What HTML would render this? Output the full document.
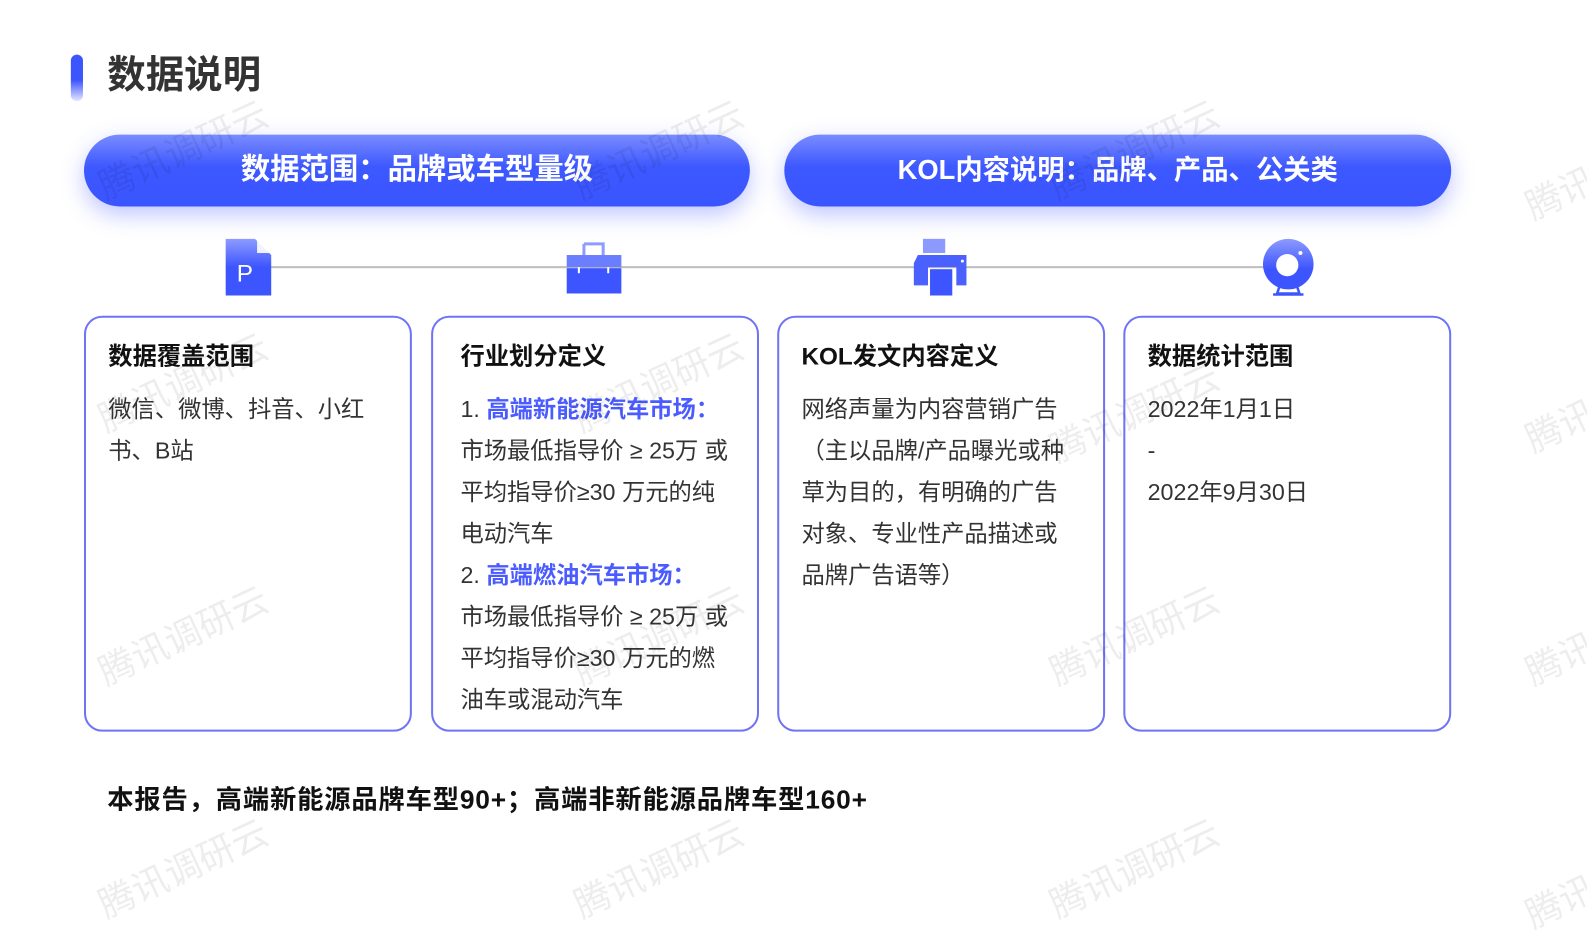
<!DOCTYPE html>
<html><head><meta charset="utf-8"><style>
*{margin:0;padding:0;box-sizing:border-box}
body{width:1587px;height:892px;background:#fff;position:relative;overflow:hidden;font-family:"Liberation Sans","Noto Sans CJK SC",sans-serif;color:#222}
#w{position:absolute;left:0;top:0;width:1568px;height:882px;transform:scale(1.012);transform-origin:0 0}
.abs{position:absolute}
.bar{left:70px;top:54px;width:12px;height:46px;border-radius:6px;background:linear-gradient(#3d55ff 55%,#e6e9ff)}
.title{left:106px;top:50px;font-size:38px;font-weight:bold;color:#333;line-height:50px}
.pill{top:133px;height:71px;border-radius:36px;background:linear-gradient(#7a8cff,#3d58ff 45%,#3a55ff);box-shadow:0 8px 22px rgba(70,90,255,.35);color:#fff;font-size:29px;font-weight:bold;text-align:center;line-height:71px}
.line{left:245px;top:263px;width:1030px;height:2px;background:#bdbdbd}
.card{top:312px;width:324px;height:411px;border:2.5px solid #6f74f5;border-radius:18px;background:#fff;padding:22px 0 0 22px}
.card h3{font-size:24px;font-weight:bold;color:#111;line-height:34px;margin-bottom:14px}
.card p{font-size:23px;line-height:41px;color:#333}
.b{color:#4a5bff;font-weight:bold}
.foot{left:106px;top:770px;font-size:26px;font-weight:bold;color:#111;letter-spacing:0.8px}
.wm{font-size:36px;color:rgba(0,0,0,.07);transform:rotate(-25deg);white-space:nowrap}
</style></head><body><div id="w">
<div class="abs bar"></div>
<div class="abs title">数据说明</div>
<div class="abs pill" style="left:83px;width:658px">数据范围：品牌或车型量级</div>
<div class="abs pill" style="left:775px;width:659px;font-size:27px">KOL内容说明：品牌、产品、公关类</div>
<div class="abs line"></div>
<svg class="abs" style="left:220px;top:234px" width="50" height="60" viewBox="0 0 50 60"><defs><linearGradient id="g" x1="0" y1="0" x2="0" y2="1"><stop offset="0" stop-color="#8e9bff"/><stop offset=".5" stop-color="#3d55ff"/></linearGradient></defs><path d="M3 2H32L48 18V58H3Z" fill="url(#g)"/><path d="M34 2L48 16H34Z" fill="#fff" opacity=".9"/><text x="14" y="44" font-size="24" fill="#fff" font-family="Liberation Sans">P</text></svg>
<svg class="abs" style="left:558px;top:238px" width="58" height="54" viewBox="0 0 58 54"><path d="M19 3H38V14" fill="none" stroke="#8e9bff" stroke-width="3"/><path d="M19 3V14" stroke="#8e9bff" stroke-width="3"/><rect x="2" y="14" width="54" height="12" fill="#6a7eff"/><rect x="2" y="27" width="54" height="25" fill="#3d55ff"/><rect x="13" y="26" width="2" height="6" fill="#fff"/><rect x="42" y="26" width="2" height="6" fill="#fff"/></svg>
<svg class="abs" style="left:901px;top:234px" width="60" height="60" viewBox="0 0 60 60"><rect x="11" y="2" width="22" height="14" fill="#8c9aff"/><path d="M6 18H54V48H44V30H16V48H2V26Z" fill="#4a60ff"/><rect x="18" y="32" width="22" height="26" fill="#3d55ff"/><circle cx="50" cy="24" r="1.5" fill="#fff"/></svg>
<svg class="abs" style="left:1246px;top:234px" width="56" height="60" viewBox="0 0 56 60"><defs><linearGradient id="g2" x1="0" y1="0" x2="0" y2="1"><stop offset="0" stop-color="#8e9bff"/><stop offset=".6" stop-color="#3d55ff"/></linearGradient></defs><circle cx="27" cy="27" r="25" fill="url(#g2)"/><circle cx="26" cy="28" r="11" fill="#fff"/><circle cx="39" cy="16" r="2" fill="#fff"/><path d="M18 50L16 56H38L36 50M12 57H42" stroke="#3d55ff" stroke-width="2.5" fill="none"/></svg>
<div class="abs card" style="left:83px"><h3>数据覆盖范围</h3><p>微信、微博、抖音、小红<br>书、B站</p></div>
<div class="abs card" style="left:426px;padding-left:27px"><h3>行业划分定义</h3><p>1. <span class="b">高端新能源汽车市场：</span><br>市场最低指导价 ≥ 25万 或<br>平均指导价≥30 万元的纯<br>电动汽车<br>2. <span class="b">高端燃油汽车市场：</span><br>市场最低指导价 ≥ 25万 或<br>平均指导价≥30 万元的燃<br>油车或混动汽车</p></div>
<div class="abs card" style="left:768px"><h3>KOL发文内容定义</h3><p>网络声量为内容营销广告<br>（主以品牌/产品曝光或种<br>草为目的，有明确的广告<br>对象、专业性产品描述或<br>品牌广告语等）</p></div>
<div class="abs card" style="left:1110px"><h3>数据统计范围</h3><p>2022年1月1日<br>-<br>2022年9月30日</p></div>
<div class="abs foot">本报告，高端新能源品牌车型90+；高端非新能源品牌车型160+</div>
<div class="abs wm" style="left:90px;top:120px">腾讯调研云</div>
<div class="abs wm" style="left:560px;top:120px">腾讯调研云</div>
<div class="abs wm" style="left:1030px;top:120px">腾讯调研云</div>
<div class="abs wm" style="left:1500px;top:140px">腾讯调研云</div>
<div class="abs wm" style="left:90px;top:350px">腾讯调研云</div>
<div class="abs wm" style="left:560px;top:350px">腾讯调研云</div>
<div class="abs wm" style="left:1030px;top:380px">腾讯调研云</div>
<div class="abs wm" style="left:1500px;top:370px">腾讯调研云</div>
<div class="abs wm" style="left:90px;top:600px">腾讯调研云</div>
<div class="abs wm" style="left:560px;top:600px">腾讯调研云</div>
<div class="abs wm" style="left:1030px;top:600px">腾讯调研云</div>
<div class="abs wm" style="left:1500px;top:600px">腾讯调研云</div>
<div class="abs wm" style="left:90px;top:830px">腾讯调研云</div>
<div class="abs wm" style="left:560px;top:830px">腾讯调研云</div>
<div class="abs wm" style="left:1030px;top:830px">腾讯调研云</div>
<div class="abs wm" style="left:1500px;top:840px">腾讯调研云</div>
</div></body></html>
